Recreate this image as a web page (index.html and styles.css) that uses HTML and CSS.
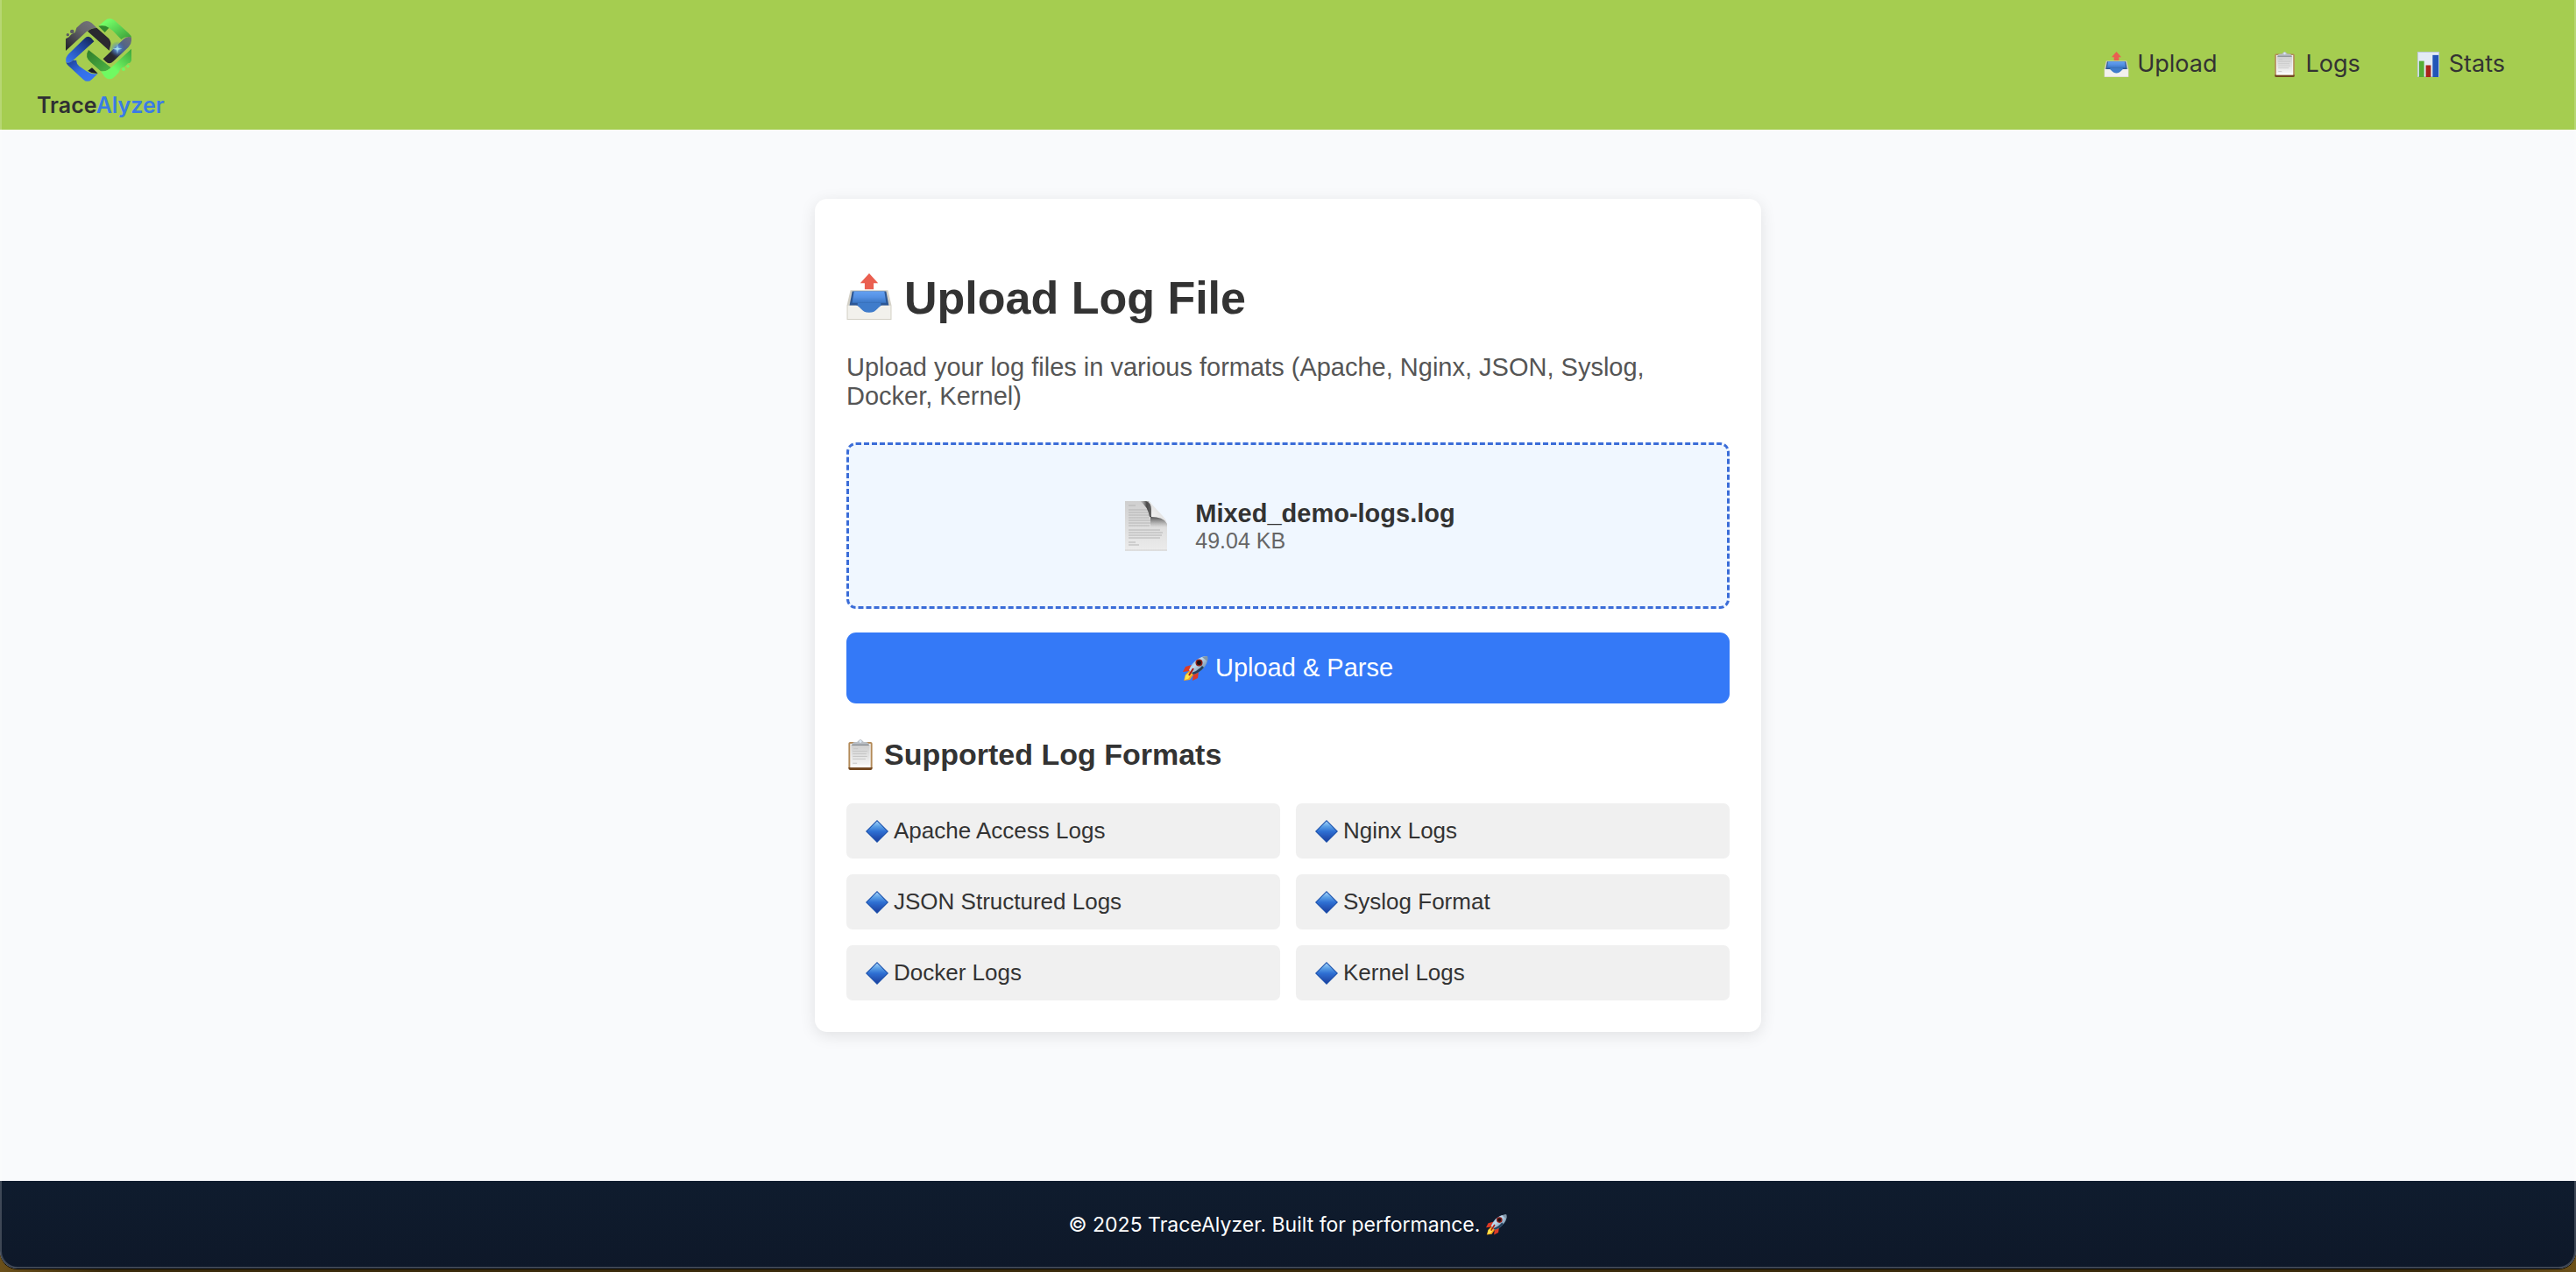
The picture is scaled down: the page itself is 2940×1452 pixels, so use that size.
FILE: index.html
```html
<!DOCTYPE html>
<html lang="en">
<head>
<meta charset="utf-8">
<meta name="viewport" content="width=device-width, initial-scale=1">
<title>TraceAlyzer</title>
<link rel="stylesheet" href="styles.css">
</head>
<body>
<svg class="sprite" aria-hidden="true">
  <defs>
    <linearGradient id="tray-in" x1="0" y1="0" x2="0" y2="1"><stop offset="0" stop-color="#64a1f2"/><stop offset=".5" stop-color="#5591e4"/><stop offset="1" stop-color="#3a76c4"/></linearGradient>
    <linearGradient id="sheet" x1="0" y1="0" x2="0" y2="1"><stop offset="0" stop-color="#cdcdcd"/><stop offset="1" stop-color="#f4f4f4"/></linearGradient>
    <linearGradient id="gem" x1="0" y1="0" x2="0" y2="1"><stop offset="0" stop-color="#a5d3fa"/><stop offset=".25" stop-color="#5a9fe6"/><stop offset=".5" stop-color="#2f70d3"/><stop offset="1" stop-color="#1c3f9f"/></linearGradient>
    <linearGradient id="hull" x1="0" y1="0" x2="1" y2="1"><stop offset="0" stop-color="#4a80b0"/><stop offset=".4" stop-color="#c3dcf0"/><stop offset="1" stop-color="#42637f"/></linearGradient>
    <linearGradient id="doc" x1="0" y1="0" x2="0" y2="1"><stop offset="0" stop-color="#cfcfcf"/><stop offset="1" stop-color="#ececec"/></linearGradient>
    <linearGradient id="doc-shade" x1="0" y1="0" x2="1" y2="0"><stop offset="0" stop-color="#777" stop-opacity="0"/><stop offset=".6" stop-color="#4a4a4a"/><stop offset="1" stop-color="#666"/></linearGradient>
    <linearGradient id="doc-fall" x1="0" y1="0" x2="0" y2="1"><stop offset="0" stop-color="#444"/><stop offset="1" stop-color="#888" stop-opacity="0"/></linearGradient>
    <linearGradient id="doc-curl" x1="0" y1="1" x2="1" y2="0"><stop offset="0" stop-color="#fff"/><stop offset="1" stop-color="#d0d0d0"/></linearGradient>
  </defs>
  <symbol id="i-tray" viewBox="0 0 50 52">
    <path d="M25 0l10 11h-5v7H20v-7h-5z" fill="#ea5f50"/>
    <path d="M4 19h42l4 17v16H0V36z" fill="#d3d0c6"/>
    <path d="M6 20h38l3 16H3z" fill="#2d5794"/>
    <path d="M8 20h34l2 13H6z" fill="url(#tray-in)"/>
    <path d="M12 33h26v6l-8 6H19l-7-6z" fill="#3f7ccb"/>
    <path d="M1 36h9c5 0 6 8 15 8s10-8 15-8h9v15H1z" fill="#f2f1ec"/>
  </symbol>
  <symbol id="i-board" viewBox="0 0 30 36">
    <rect x="1" y="3" width="28" height="32" rx="2" fill="#b38a58"/>
    <path d="M1 33h28v1q0 2-2 2H3q-2 0-2-2z" fill="#71461f"/>
    <rect x="3" y="5" width="24" height="28" fill="#fafafa"/>
    <rect x="4" y="6" width="22" height="24" fill="url(#sheet)"/>
    <path d="M7 11h5M6 14h17M6 17h16M6 20h17M6 23h15M6 28h5" stroke="#c4c4c4" stroke-width="1"/>
    <path d="M5 7q0-4 4-4h2q3-3 4-3t4 3h2q4 0 4 4z" fill="#b9bec4"/>
    <circle cx="15" cy="2.500" r="1.500" fill="#dce9f5"/>
    <path d="M5 6.500h20" stroke="#777b80"/>
  </symbol>
  <symbol id="i-chart" viewBox="0 0 26 30">
    <rect width="26" height="30" fill="#bcc8d6"/>
    <rect x="1" y="1" width="24" height="28" fill="#e3ebf5"/>
    <rect x="2" y="11" width="6" height="19" fill="#55ad35"/>
    <rect x="10" y="16" width="6" height="14" fill="#a9241b"/>
    <rect x="18" y="4" width="7" height="26" fill="#2355b8"/>
  </symbol>
  <symbol id="i-gem" viewBox="0 0 26 26">
    <path d="M13 0l13 13-13 13L0 13z" fill="#1d52ac"/>
    <path d="M13 1.500L24.500 13 13 24.500 1.500 13z" fill="url(#gem)"/>
  </symbol>
  <symbol id="i-rocket" viewBox="0 0 29 28">
    <path d="M10 10L3 12 0 18l8-1z" fill="#dd3a25"/>
    <path d="M18 18l-1 7-6 3 1-9z" fill="#dd3a25"/>
    <path d="M7 17q4 0 5 4l-4 6-7 1 2-7z" fill="#f6a51f"/>
    <path d="M7 19q3 0 3 2l-4 5-4 1 1-5z" fill="#ffe34b"/>
    <path d="M28 0q1 8-4 13-5 6-12 8l-5-5q3-8 9-12 5-4 12-4z" fill="url(#hull)"/>
    <path d="M28 0q1 3 0 6l-6-5q3-1 6-1z" fill="#8096a8"/>
    <path d="M24 13q-5 6-12 8l-2-2q7-2 12-8z" fill="#24425e"/>
    <circle cx="18.500" cy="7.500" r="4" fill="#8e1d17"/>
    <circle cx="18.500" cy="7.500" r="2.500" fill="#1b1113"/>
    <path d="M12 14l-5 8" stroke="#a91e17" stroke-width="2"/>
  </symbol>
  <symbol id="i-doc" viewBox="0 0 48 57">
    <path d="M0 0h26q4 1 5 8l1 9q13 1 16 9v31H0z" fill="url(#doc)"/>
    <path d="M4 5h8M4 10h22M4 13h22M4 16h24M4 19h24M4 22h25M4 25h25M4 28h24M4 33h36M4 36h39M4 39h38M4 42h36M4 47h8M4 50h12" stroke="#b4b4b4" stroke-width="1"/>
    <path d="M17 0h9q4 1 4 8v10H28Q26 6 17 0z" fill="url(#doc-shade)"/>
    <path d="M29 17q15 0 19 9v4H29z" fill="url(#doc-fall)"/>
    <path d="M24 0q6 2 6 9v9q13 0 18 7-1-4-5-8L31 4q-3-4-7-4z" fill="url(#doc-curl)"/>
    <path d="M0 56h48" stroke="#d0d0d0"/>
  </symbol>
</svg>

<div class="window">
  <header class="topbar">
    <a class="brand" href="#">
      <svg class="brand-mark" viewBox="222 59 231 222" aria-hidden="true">
        <defs>
          <linearGradient id="lg-grey" x1="0" y1="1" x2="1" y2="0"><stop offset="0" stop-color="#1f1f26"/><stop offset=".6" stop-color="#66666c"/><stop offset="1" stop-color="#77777d"/></linearGradient>
          <linearGradient id="lg-bar" x1="0" y1="1" x2="1" y2="0"><stop offset=".3" stop-color="#28272e"/><stop offset=".6" stop-color="#48608c"/><stop offset="1" stop-color="#707076"/></linearGradient>
          <linearGradient id="lg-blue" x1="1" y1="0" x2="0" y2="1"><stop offset="0" stop-color="#13204a"/><stop offset=".5" stop-color="#2450b0"/><stop offset="1" stop-color="#3a7af8"/></linearGradient>
          <linearGradient id="lg-blue2" x1="0" y1="0" x2="1" y2="1"><stop offset="0" stop-color="#1c3c8e"/><stop offset=".5" stop-color="#336fe8"/><stop offset="1" stop-color="#3878f4"/></linearGradient>
          <linearGradient id="lg-green" x1="0" y1="0" x2="1" y2="1"><stop offset=".2" stop-color="#72fb66"/><stop offset="1" stop-color="#3a9a36"/></linearGradient>
          <linearGradient id="lg-green2" x1="0" y1="0" x2="1" y2="1"><stop offset="0" stop-color="#2f7c2a"/><stop offset="1" stop-color="#4db545"/></linearGradient>
          <linearGradient id="lg-green3" x1="1" y1="0" x2="0" y2="1"><stop offset="0" stop-color="#3ea43a"/><stop offset=".6" stop-color="#6ffa62"/></linearGradient>
          <radialGradient id="lg-glow"><stop offset="0" stop-color="#a9dcff"/><stop offset=".35" stop-color="#5b93dc" stop-opacity=".7"/><stop offset="1" stop-color="#3b6bb4" stop-opacity="0"/></radialGradient>
        </defs>
        <path d="M225 173V132L236 126 244 117 257 110 262 94 278 79Q296 63 314 78L332 95Q312 94 296 108Z" fill="url(#lg-grey)"/>
        <circle cx="247" cy="107" r="7" fill="#5b5b62"/><circle cx="232" cy="118" r="5" fill="#5b5b62"/>
        <path d="M300 106Q314 94 332 95L370 129Q380 138 379 152L374 172Z" fill="#2a2930"/>
        <path d="M337 88L358 70Q375 56 392 69L440 112Q450 121 450 128 432 120 415 134L386 104Q364 84 337 88Z" fill="url(#lg-green)"/>
        <path d="M337 88Q358 84 373 94L359 110Z" fill="#328a2e"/>
        <path d="M226 211Q223 195 236 183L290 130Q301 119 312 129L322 141 250 206Q234 220 226 211Z" fill="url(#lg-blue)"/>
        <path d="M226 211Q234 220 250 206L262 205Q260 216 272 226L296 243Q316 256 335 251L314 271Q300 284 285 271L234 224Q227 217 226 211Z" fill="url(#lg-blue2)"/>
        <path d="M301 241L315 231 335 250Q316 253 301 241Z" fill="#1c1d28"/>
        <path d="M303 170L380 231Q364 246 345 243L311 213Q288 194 303 170Z" fill="url(#lg-green2)"/>
        <path d="M345 243Q364 246 380 231L450 166V205Q449 214 438 216L428 226 414 232 406 248 392 262Q376 277 359 263Z" fill="url(#lg-green3)"/>
        <circle cx="423" cy="236" r="6" fill="#6ffa62"/><circle cx="438" cy="226" r="5" fill="#6ffa62"/>
        <path d="M353 201L423 133Q436 121 450 127V138Q450 150 440 160L388 209Q375 222 362 210Z" fill="url(#lg-bar)"/>
        <circle cx="402" cy="166" r="26" fill="url(#lg-glow)"/>
        <path d="M402 148l2 15 14 3-14 3-2 16-2-16-14-3 14-3z" fill="#a4e2ea"/>
      </svg>
      <span class="brand-name">Trace<span class="brand-accent">Alyzer</span></span>
    </a>
    <nav class="nav" aria-label="Main">
      <a href="#upload"><svg class="nav-icon" aria-hidden="true"><use href="#i-tray"/></svg>Upload</a>
      <a href="#logs"><svg class="nav-icon" aria-hidden="true"><use href="#i-board"/></svg>Logs</a>
      <a href="#stats"><svg class="nav-icon" aria-hidden="true"><use href="#i-chart"/></svg>Stats</a>
    </nav>
  </header>

  <main class="page">
    <section class="card" id="upload">
      <h1><svg class="title-icon" aria-hidden="true"><use href="#i-tray"/></svg>Upload Log File</h1>
      <p class="intro">Upload your log files in various formats (Apache, Nginx, JSON, Syslog, Docker, Kernel)</p>
      <form>
        <input class="file-input" type="file" id="log-file">
        <label class="dropzone" for="log-file">
          <svg class="file-icon" aria-hidden="true"><use href="#i-doc"/></svg>
          <span class="file-info">
            <span class="file-name">Mixed_demo-logs.log</span>
            <span class="file-size">49.04 KB</span>
          </span>
        </label>
        <button class="submit" type="button"><svg class="submit-icon" aria-hidden="true"><use href="#i-rocket"/></svg>Upload &amp; Parse</button>
      </form>
      <h2><svg class="section-icon" aria-hidden="true"><use href="#i-board"/></svg>Supported Log Formats</h2>
      <ul class="formats">
        <li><svg class="gem" aria-hidden="true"><use href="#i-gem"/></svg>Apache Access Logs</li>
        <li><svg class="gem" aria-hidden="true"><use href="#i-gem"/></svg>Nginx Logs</li>
        <li><svg class="gem" aria-hidden="true"><use href="#i-gem"/></svg>JSON Structured Logs</li>
        <li><svg class="gem" aria-hidden="true"><use href="#i-gem"/></svg>Syslog Format</li>
        <li><svg class="gem" aria-hidden="true"><use href="#i-gem"/></svg>Docker Logs</li>
        <li><svg class="gem" aria-hidden="true"><use href="#i-gem"/></svg>Kernel Logs</li>
      </ul>
    </section>
  </main>

  <footer class="footer">© 2025 TraceAlyzer. Built for performance.<svg class="footer-icon" aria-hidden="true"><use href="#i-rocket"/></svg></footer>
</div>
</body>
</html>
```

FILE: styles.css
```css
* {
  box-sizing: border-box;
}

body {
  margin: 0;
  background: linear-gradient(90deg, #6b501a, #3a2a0a 4%, #3a2a0a 94%, #6b501a);
  color: #333;
  font-family: "Liberation Sans", Arial, sans-serif;
}

.sprite {
  position: absolute;
  width: 0;
  height: 0;
}

/* Rounded application window with a thin light edge */
.window {
  position: relative;
  display: flex;
  flex-direction: column;
  min-height: calc(100vh - 4px);
  margin-bottom: 4px;
  overflow: hidden;
  background: #f9fafc;
  border-radius: 0 0 20px 20px;
  box-shadow: 0 1px 0 #000;
}

.window::after {
  content: "";
  position: absolute;
  inset: 0;
  border: 2px solid rgba(255, 255, 255, 0.2);
  border-top: 0;
  border-radius: inherit;
  pointer-events: none;
}

.topbar {
  display: flex;
  align-items: center;
  justify-content: space-between;
  height: 148px;
  padding: 0 81px 0 42px;
  background: #a5cd50;
}

.brand {
  display: flex;
  flex-direction: column;
  align-items: center;
  gap: 10px;
  padding-top: 8px;
  color: #2f2f33;
  text-decoration: none;
}

.brand-mark {
  width: 77px;
  height: 74px;
  margin-right: 4px;
}

.brand-name {
  font: 600 25px/32px Inter, sans-serif;
}

.brand-accent {
  color: #3b7be6;
}

.nav {
  display: flex;
  gap: 63px;
  padding-bottom: 2px;
}

.nav a {
  display: flex;
  align-items: center;
  gap: 9px;
  color: #333;
  font: 27px/34px Inter, sans-serif;
  text-decoration: none;
}

.nav-icon {
  width: 29px;
  height: 29px;
}

.page {
  flex: 1;
  padding: 79px 36px;
}

.card {
  max-width: 1080px;
  margin: 0 auto;
  padding: 36px;
  background: #fff;
  border-radius: 14px;
  box-shadow: 0 4px 18px rgba(0, 0, 0, 0.1);
}

h1,
h2 {
  display: flex;
  align-items: center;
}

h1 {
  gap: 14px;
  margin: 47px 0 33px;
  font-size: 52px;
  line-height: 60px;
}

.title-icon {
  width: 52px;
  height: 53px;
  margin-bottom: 4px;
}

.intro {
  margin: 0 0 36px;
  color: #555;
  font-size: 29px;
  line-height: 33px;
}

.file-input {
  position: absolute;
  width: 1px;
  height: 1px;
  opacity: 0;
}

.dropzone {
  display: flex;
  align-items: center;
  justify-content: center;
  gap: 27px;
  min-height: 190px;
  background: #f0f7ff;
  border: 3px dashed #3a6cd8;
  border-radius: 11px;
  cursor: pointer;
}

.file-icon {
  width: 58px;
  height: 57px;
}

.file-info {
  display: flex;
  flex-direction: column;
}

.file-name {
  font-size: 29px;
  font-weight: bold;
  line-height: 33px;
}

.file-size {
  color: #666;
  font-size: 25px;
  line-height: 28px;
}

.submit {
  display: flex;
  align-items: center;
  justify-content: center;
  gap: 8px;
  width: 100%;
  height: 81px;
  margin-top: 27px;
  padding: 0;
  background: #3479f7;
  border: 0;
  border-radius: 11px;
  color: #fff;
  font-family: inherit;
  font-size: 29px;
  cursor: pointer;
}

.submit-icon {
  width: 29px;
  height: 28px;
}

h2 {
  gap: 11px;
  margin: 38px 0 36px;
  font-size: 34px;
  line-height: 40px;
}

.section-icon {
  width: 32px;
  height: 35px;
}

.formats {
  display: grid;
  grid-template-columns: 1fr 1fr;
  gap: 18px;
  margin: 0;
  padding: 0;
  list-style: none;
}

.formats li {
  display: flex;
  align-items: center;
  gap: 6px;
  height: 63px;
  padding: 0 22px;
  background: #f0f0f0;
  border-radius: 7px;
  font-size: 26px;
}

.gem {
  width: 26px;
  height: 26px;
}

.footer {
  display: flex;
  align-items: center;
  justify-content: center;
  gap: 7px;
  height: 100px;
  background: linear-gradient(#0f1c2e, #0e1829);
  color: #fff;
  font: 23px/28px Inter, sans-serif;
}

.footer-icon {
  width: 24px;
  height: 24px;
}
```
